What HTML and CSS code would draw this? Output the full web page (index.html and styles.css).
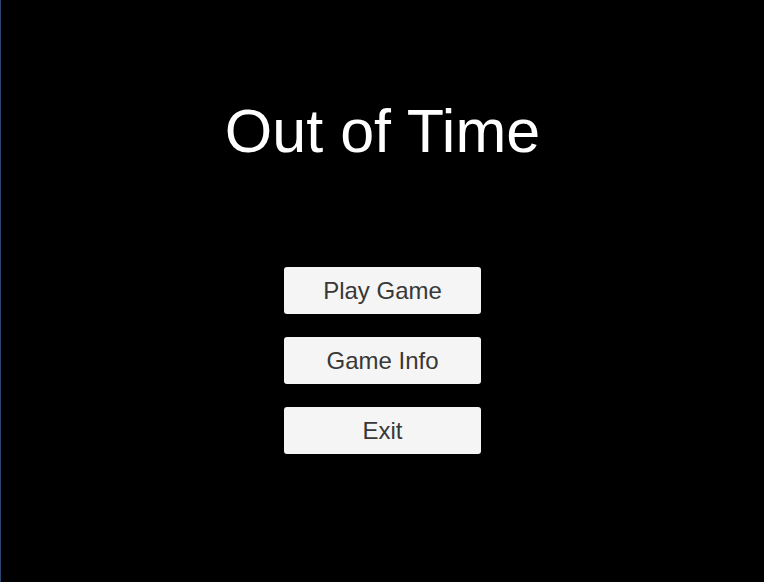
FILE: index.html
```html
<!DOCTYPE html>
<html>
<head>
<meta charset="utf-8">
<link rel="stylesheet" href="styles.css">
</head>
<body>
<div class="screen">
  <h1 class="title">Out of Time</h1>
  <div class="menu">
    <button class="btn">Play Game</button>
    <button class="btn">Game Info</button>
    <button class="btn">Exit</button>
  </div>
</div>
</body>
</html>
```
FILE: styles.css
```css
html, body {
  margin: 0;
  padding: 0;
  background: #000;
}
.screen {
  box-sizing: border-box;
  width: 764px;
  height: 582px;
  border-left: 1px solid #2a4670;
  background: #000;
  display: flex;
  flex-direction: column;
  align-items: center;
  font-family: "Liberation Sans", Arial, sans-serif;
  padding-top: 101px;
}
.title {
  margin: 0;
  font-weight: normal;
  font-size: 61px;
  line-height: 61px;
  color: #fff;
}
.menu {
  margin-top: 105px;
  display: flex;
  flex-direction: column;
  gap: 23px;
  align-items: center;
}
.btn {
  width: 197px;
  height: 47px;
  border: none;
  border-radius: 3px;
  background: #f5f5f5;
  color: #383838;
  font-family: "Liberation Sans", Arial, sans-serif;
  font-size: 24px;
  line-height: 24px;
  padding: 0;
  display: flex;
  align-items: center;
  justify-content: center;
}
```
